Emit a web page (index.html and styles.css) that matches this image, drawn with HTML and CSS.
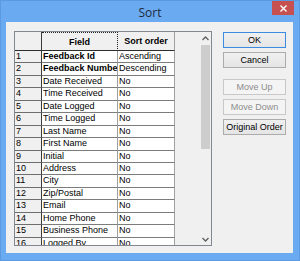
FILE: index.html
```html
<!DOCTYPE html>
<html lang="en">
<head>
  <meta charset="UTF-8" />
  <title>Sort</title>
  <link rel="stylesheet" href="styles.css">
</head>
<body>
  <div class="window">
    <div class="titlebar">
      <span class="title">Sort</span>
      <div class="close">
        <svg width="7" height="7" viewBox="0 0 7 7"><path d="M0.5 0.5 L6.5 6.5 M6.5 0.5 L0.5 6.5" stroke="#fff" stroke-width="1.4"/></svg>
      </div>
    </div>
    <div class="content">
      <div class="grid">
        <div class="sheet">
          <div class="row head">
            <div class="rh"></div>
            <div class="c1 focus">Field</div>
            <div class="c2">Sort order</div>
          </div>
          <div class="row"><div class="rh">1</div><div class="c1 bold">Feedback Id</div><div class="c2">Ascending</div></div>
          <div class="row"><div class="rh">2</div><div class="c1 bold">Feedback Number</div><div class="c2">Descending</div></div>
          <div class="row"><div class="rh">3</div><div class="c1">Date Received</div><div class="c2">No</div></div>
          <div class="row"><div class="rh">4</div><div class="c1">Time Received</div><div class="c2">No</div></div>
          <div class="row"><div class="rh">5</div><div class="c1">Date Logged</div><div class="c2">No</div></div>
          <div class="row"><div class="rh">6</div><div class="c1">Time Logged</div><div class="c2">No</div></div>
          <div class="row"><div class="rh">7</div><div class="c1">Last Name</div><div class="c2">No</div></div>
          <div class="row"><div class="rh">8</div><div class="c1">First Name</div><div class="c2">No</div></div>
          <div class="row"><div class="rh">9</div><div class="c1">Initial</div><div class="c2">No</div></div>
          <div class="row"><div class="rh">10</div><div class="c1">Address</div><div class="c2">No</div></div>
          <div class="row"><div class="rh">11</div><div class="c1">City</div><div class="c2">No</div></div>
          <div class="row"><div class="rh">12</div><div class="c1">Zip/Postal</div><div class="c2">No</div></div>
          <div class="row"><div class="rh">13</div><div class="c1">Email</div><div class="c2">No</div></div>
          <div class="row"><div class="rh">14</div><div class="c1">Home Phone</div><div class="c2">No</div></div>
          <div class="row"><div class="rh">15</div><div class="c1">Business Phone</div><div class="c2">No</div></div>
          <div class="row"><div class="rh">16</div><div class="c1">Logged By</div><div class="c2">No</div></div>
        </div>
        <div class="scrollbar">
          <svg class="arrow" width="7" height="5" viewBox="0 0 7 5"><path d="M0.5 4 L3.5 1 L6.5 4" fill="none" stroke="#606060" stroke-width="1.3"/></svg>
          <div class="track"><div class="thumb"></div></div>
          <svg class="arrow" width="7" height="5" viewBox="0 0 7 5"><path d="M0.5 1 L3.5 4 L6.5 1" fill="none" stroke="#606060" stroke-width="1.3"/></svg>
        </div>
      </div>
      <div class="buttons">
        <button class="btn default">OK</button>
        <button class="btn">Cancel</button>
        <button class="btn group" disabled>Move Up</button>
        <button class="btn" disabled>Move Down</button>
        <button class="btn">Original Order</button>
      </div>
    </div>
  </div>
</body>
</html>
```

FILE: styles.css
```css
body {
  margin: 0;
  font-family: "Liberation Sans", Arial, sans-serif;
}

.window {
  width: 300px;
  height: 261px;
  box-sizing: border-box;
  background: #6aaaf0;
  border: 1px solid #5b9ae0;
  display: flex;
  flex-direction: column;
}

.titlebar {
  height: 21px;
  position: relative;
  display: flex;
  align-items: center;
  justify-content: center;
}

.title {
  font-family: "Open Sans", "Noto Sans", sans-serif;
  font-size: 12px;
  color: #1e2a3a;
  margin-top: 1px;
}

.close {
  position: absolute;
  right: 5px;
  top: 0;
  width: 22px;
  height: 14px;
  background: #c75050;
  display: flex;
  align-items: center;
  justify-content: center;
}

.content {
  margin: 0 6px 7px 5px;
  flex: 1;
  background: #f0f0f0;
  display: flex;
  align-items: flex-start;
  padding: 9px 0 0 8px;
}

.grid {
  width: 198px;
  height: 215px;
  box-sizing: border-box;
  border: 1px solid #828790;
  display: flex;
  background: #f0f0f0;
  overflow: hidden;
}

.sheet {
  width: 185px;
  font-size: 9px;
  color: #000;
}

.row {
  display: flex;
  height: 12.45px;
  line-height: 11px;
}

.row > div {
  box-sizing: border-box;
  border-bottom: 1px solid #7c7c7c;
  border-right: 1px solid #a0a0a0;
  white-space: nowrap;
  overflow: hidden;
  padding-left: 1px;
  background: #fff;
}

.row .rh {
  width: 27px;
  background: #f0f0f0;
  border-right-color: #3c3c3c;
  border-bottom-color: #6e6e6e;
}

.row .c1 {
  width: 76px;
}

.row .c2 {
  width: 57px;
}

.bold {
  font-weight: bold;
}

.row.head {
  height: 19px;
  line-height: 18px;
  font-weight: bold;
}

.row.head > div {
  background: #f0f0f0;
  border-bottom-color: #2e2e2e;
  text-align: center;
  padding-left: 0;
}

.row.head .c1 {
  border: 1px dotted #222;
  border-left: none;
  border-bottom: 1px solid #2e2e2e;
}

.scrollbar {
  width: 11px;
  background: #f0f0f0;
  display: flex;
  flex-direction: column;
  align-items: center;
}

.arrow {
  margin: 4px 0 3px;
}

.track {
  flex: 1;
  width: 100%;
}

.thumb {
  width: 9px;
  height: 104px;
  margin: 1px 0 0 1px;
  background: #cdcdcd;
}

.buttons {
  margin: 1px 0 0 11px;
  width: 63px;
  display: flex;
  flex-direction: column;
  gap: 4px;
}

.btn {
  height: 16px;
  padding: 0;
  box-sizing: border-box;
  font-family: "Liberation Sans", Arial, sans-serif;
  font-size: 9px;
  color: #000;
  background: linear-gradient(#f0f0f0, #e5e5e5);
  border: 1px solid #acacac;
  border-radius: 0;
}

.btn.default {
  border-color: #3c8be0;
}

.btn.group {
  margin-top: 7px;
}

.btn:disabled {
  color: #8d8d8d;
  background: #f4f4f4;
  border-color: #c8c8c8;
}
```
